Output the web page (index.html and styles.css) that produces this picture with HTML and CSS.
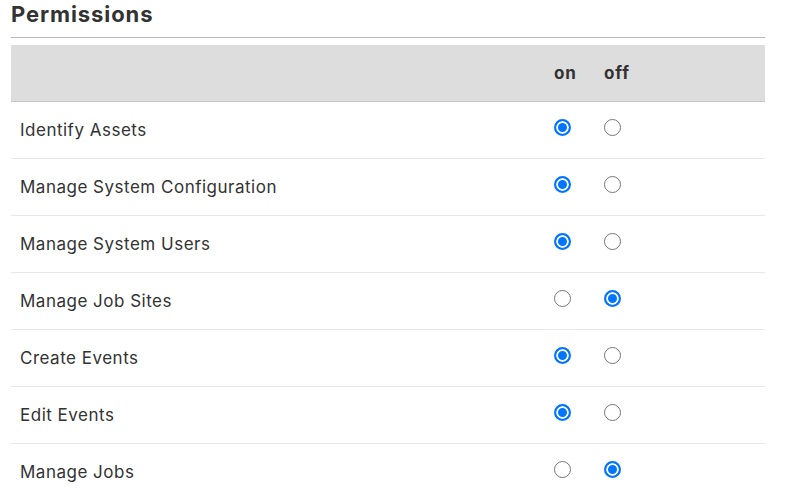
FILE: index.html
```html
<!DOCTYPE html>
<html lang="en">
<head>
<meta charset="utf-8">
<title>Permissions</title>
<link rel="stylesheet" href="styles.css">
</head>
<body>
<div class="panel">
  <h2 class="panel-title">Permissions</h2>
  <div class="rule"></div>
  <table class="perm-table">
    <colgroup>
      <col class="col-label">
      <col class="col-on">
      <col class="col-off">
    </colgroup>
    <thead>
      <tr><th></th><th>on</th><th>off</th></tr>
    </thead>
    <tbody>
      <tr><td>Identify Assets</td><td><input type="radio" class="radio" name="p1" checked></td><td><input type="radio" class="radio" name="p1"></td></tr>
      <tr><td>Manage System Configuration</td><td><input type="radio" class="radio" name="p2" checked></td><td><input type="radio" class="radio" name="p2"></td></tr>
      <tr><td>Manage System Users</td><td><input type="radio" class="radio" name="p3" checked></td><td><input type="radio" class="radio" name="p3"></td></tr>
      <tr><td>Manage Job Sites</td><td><input type="radio" class="radio" name="p4"></td><td><input type="radio" class="radio" name="p4" checked></td></tr>
      <tr><td>Create Events</td><td><input type="radio" class="radio" name="p5" checked></td><td><input type="radio" class="radio" name="p5"></td></tr>
      <tr><td>Edit Events</td><td><input type="radio" class="radio" name="p6" checked></td><td><input type="radio" class="radio" name="p6"></td></tr>
      <tr><td>Manage Jobs</td><td><input type="radio" class="radio" name="p7"></td><td><input type="radio" class="radio" name="p7" checked></td></tr>
    </tbody>
  </table>
</div>
</body>
</html>
```
FILE: styles.css
```css
html, body {
  margin: 0;
  padding: 0;
  background: #fff;
}
body {
  font-family: Inter, "Liberation Sans", Arial, sans-serif;
  color: #333;
}
.panel {
  width: 754px;
  padding: 0 0 0 11px;
}
.panel-title {
  margin: 0;
  font-size: 22px;
  line-height: 28px;
  font-weight: bold;
  letter-spacing: 0.9px;
  color: #333;
}
.rule {
  height: 1px;
  background: #b8b8b8;
  margin-top: 9px;
}
.perm-table {
  width: 754px;
  margin-top: 7px;
  border-collapse: collapse;
  table-layout: fixed;
}
.col-label { width: 533px; }
.col-on { width: 50px; }
.col-off { width: 171px; }
.perm-table th {
  background: #dddddd;
  height: 56px;
  padding: 0 0 0 10px;
  text-align: left;
  font-size: 17px;
  line-height: 20px;
  font-weight: bold;
  letter-spacing: 0.9px;
  color: #333;
  border-bottom: 1px solid #c8c8c8;
  vertical-align: middle;
}
.perm-table td {
  height: 56px;
  padding: 0 0 0 9px;
  font-size: 17px;
  line-height: 20px;
  letter-spacing: 0.5px;
  color: #333;
  border-bottom: 1px solid #e8e8e8;
  vertical-align: middle;
}
.perm-table td + td {
  padding-left: 10px;
}
.radio {
  appearance: none;
  -webkit-appearance: none;
  box-sizing: border-box;
  width: 17px;
  height: 17px;
  margin: -5px 0 0 0;
  border: 1.5px solid #767676;
  border-radius: 50%;
  background: #fff;
  display: block;
}
.radio:checked {
  border: 2px solid #0075ff;
  background: #0075ff;
  box-shadow: inset 0 0 0 2px #fff;
}
```
